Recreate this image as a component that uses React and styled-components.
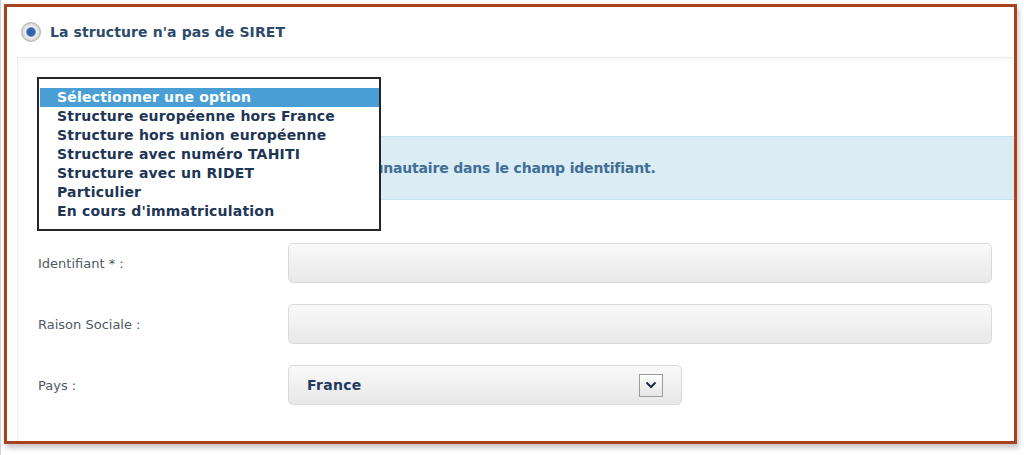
import React from 'react';
import styled, { createGlobalStyle } from 'styled-components';

const GlobalStyle = createGlobalStyle`
  html, body {
    margin: 0;
    padding: 0;
    background: #fff;
  }
  body {
    font-family: "DejaVu Sans", Verdana, sans-serif;
  }
`;

const options = [
  'Sélectionner une option',
  'Structure européenne hors France',
  'Structure hors union européenne',
  'Structure avec numéro TAHITI',
  'Structure avec un RIDET',
  'Particulier',
  "En cours d'immatriculation"
];

const Page = styled.div`
  height: 455px;
  box-sizing: border-box;
  border-left: 1px solid #d2d2d2;
  padding: 4px 0 0 3px;
`;

const Frame = styled.div`
  box-sizing: border-box;
  width: 1013px;
  height: 440px;
  border: 3px solid #a6431e;
  box-shadow: 2px 4px 5px rgba(0, 0, 0, 0.22);
  display: flex;
  flex-direction: column;
`;

const Header = styled.label`
  height: 50px;
  display: flex;
  align-items: center;
  gap: 9px;
  padding-left: 14px;
  font-size: 14px;
  font-weight: bold;
  letter-spacing: 0.1px;
  color: #2c4a6c;
`;

const Radio = styled.span`
  width: 18px;
  height: 18px;
  border-radius: 50%;
  border: 1px solid #b4b4b4;
  background: radial-gradient(circle, #2f66a8 0 3.5px, #6c93c4 4.5px, #f4f4f4 5.5px, #e2e2e2 7px, #cfcfcf 9px);
`;

const Panel = styled.div`
  flex: 1;
  margin-left: 10px;
  border-top: 1px solid #ececec;
  border-left: 1px solid #ececec;
  box-shadow: inset 1px 2px 3px rgba(0, 0, 0, 0.03);
  display: flex;
  flex-direction: column;
`;

const TypeRow = styled.div`
  position: relative;
  height: 78px;
`;

const OptionList = styled.ul`
  position: absolute;
  top: 19px;
  left: 19px;
  z-index: 2;
  width: 344px;
  box-sizing: border-box;
  margin: 0;
  padding: 9px 0 8px 1px;
  list-style: none;
  background: #fff;
  border: 2px solid #262626;
`;

const Option = styled.li`
  height: 19px;
  line-height: 19px;
  padding-left: 17px;
  font-size: 14px;
  font-weight: bold;
  letter-spacing: 0.2px;
  white-space: nowrap;
  color: ${p => (p.$active ? '#fff' : '#1e3556')};
  background: ${p => (p.$active ? '#4a9ed6' : 'transparent')};
`;

const Info = styled.div`
  margin-left: 20px;
  height: 62px;
  display: flex;
  align-items: center;
  background: #dcecf5;
  border-top: 1px solid #c9e4f0;
  border-bottom: 1px solid #c9e4f0;
  font-size: 14px;
  font-weight: bold;
  letter-spacing: -0.18px;
  color: #3f6f97;
  white-space: nowrap;
`;

const Form = styled.div`
  padding: 43px 22px 0 20px;
  display: flex;
  flex-direction: column;
  gap: 21px;
`;

const Row = styled.div`
  display: grid;
  grid-template-columns: 250px 1fr;
  align-items: center;
`;

const Label = styled.span`
  font-size: 13px;
  color: #4e5864;
`;

const Field = styled.div`
  box-sizing: border-box;
  height: 40px;
  width: ${p => p.$width || '100%'};
  border: 1px solid #d9d9d9;
  border-radius: 5px;
  background: linear-gradient(#f9f9f9, #e8e8e8);
  display: flex;
  align-items: center;
  justify-content: space-between;
  padding: 0 18px 0 18px;
`;

const Value = styled.span`
  font-size: 14px;
  font-weight: bold;
  letter-spacing: 0.3px;
  color: #1f3a5d;
`;

const Arrow = styled.span`
  width: 24px;
  height: 23px;
  box-sizing: border-box;
  border: 1px solid #9c9c9c;
  background: linear-gradient(#fdfdfd, #e4e4e4);
  display: flex;
  align-items: center;
  justify-content: center;
`;

export default function App() {
  return (
    <Page>
      <GlobalStyle />
      <Frame>
        <Header>
          <Radio />
          La structure n'a pas de SIRET
        </Header>
        <Panel>
          <TypeRow>
            <OptionList>
              {options.map((o, i) => (
                <Option key={o} $active={i === 0}>{o}</Option>
              ))}
            </OptionList>
          </TypeRow>
          <Info>
            Veuillez saisir le numéro de TVA intracommunautaire dans le champ identifiant.
          </Info>
          <Form>
            <Row>
              <Label>Identifiant * :</Label>
              <Field />
            </Row>
            <Row>
              <Label>Raison Sociale :</Label>
              <Field />
            </Row>
            <Row>
              <Label>Pays :</Label>
              <Field $width="394px">
                <Value>France</Value>
                <Arrow>
                  <svg width="12" height="8" viewBox="0 0 12 8">
                    <path d="M1.5 1.5 L6 6 L10.5 1.5" fill="none" stroke="#1b2b48" strokeWidth="2" />
                  </svg>
                </Arrow>
              </Field>
            </Row>
          </Form>
        </Panel>
      </Frame>
    </Page>
  );
}
